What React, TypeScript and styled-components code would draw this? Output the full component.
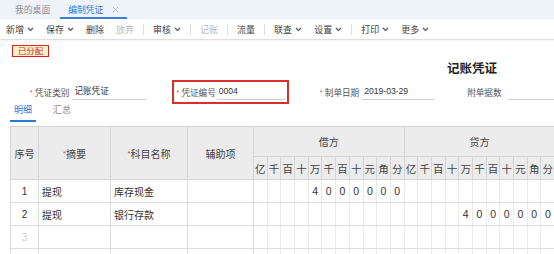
import styled, { createGlobalStyle } from 'styled-components';

const GlobalStyle = createGlobalStyle`
  html, body {
    margin: 0;
    padding: 0;
    background: #fff;
  }
  body {
    font-family: "Liberation Sans", "Noto Sans CJK SC", sans-serif;
    color: #333;
    overflow: hidden;
  }
`

const Page = styled.div`
  width: 554px;
  height: 254px;
  overflow: hidden;
`

const TabBar = styled.div`
  height: 19px;
  background: #eef2f9;
  display: flex;
  gap: 2px;
  padding-left: 7px;
  box-sizing: border-box;
`

const Tab = styled.div<{ $active?: boolean }>`
  display: flex;
  align-items: center;
  gap: 9px;
  padding: 1px 8px 0;
  font-size: 8.8px;
  color: ${p => (p.$active ? '#2b78d8' : '#8c919a')};
  border-bottom: 2px solid ${p => (p.$active ? '#3a7fdc' : 'transparent')};
  box-sizing: border-box;
`

const Toolbar = styled.div`
  height: 21px;
  display: flex;
  align-items: center;
  border-bottom: 1px solid #dedede;
  box-shadow: 0 1px 2px rgba(0, 0, 0, 0.05);
  box-sizing: border-box;
`

const ToolItem = styled.div<{ $disabled?: boolean }>`
  display: flex;
  align-items: center;
  gap: 3px;
  padding: 0 6px;
  font-size: 9px;
  color: ${p => (p.$disabled ? '#b8b8b8' : '#444')};
`

const ToolSep = styled.span`
  width: 1px;
  height: 11px;
  margin: 0 3px;
  background: #dcdcdc;
`

const Badge = styled.div`
  display: inline-block;
  margin: 4px 0 0 12px;
  height: 12px;
  line-height: 10px;
  padding: 0 5px;
  border: 1px solid #d0262a;
  background: #fff3c6;
  color: #d0262a;
  font-size: 8.4px;
  box-sizing: border-box;
`

const TitleRow = styled.div`
  height: 17px;
  margin-top: 3px;
  display: flex;
  justify-content: flex-end;
  padding-right: 57px;
  font-size: 12.5px;
  line-height: 17px;
  font-weight: bold;
  color: #222;
`

const FormRow = styled.div`
  height: 24px;
  margin-top: 2px;
  display: flex;
  align-items: center;
  padding-left: 30px;
  font-size: 8.6px;
`

const Field = styled.div<{ $gap: number }>`
  display: flex;
  align-items: center;
  margin-left: ${p => p.$gap}px;
`

const HighlightField = styled(Field)`
  height: 24px;
  border: 2px solid #d9302c;
  padding: 0 2px;
  box-sizing: border-box;
`

const Star = styled.span`
  width: 5px;
  font-size: 7px;
  color: #e0463f;
  line-height: 1;
`

const Label = styled.span`
  color: #555;
  white-space: nowrap;
`

const Value = styled.div<{ $w: number; $ml: number }>`
  width: ${p => p.$w}px;
  margin-left: ${p => p.$ml}px;
  height: 16px;
  line-height: 15px;
  padding-left: 2px;
  border-bottom: 1px solid #cfcfcf;
  box-sizing: border-box;
  color: #333;
  white-space: nowrap;
`

const SubTabs = styled.div`
  height: 22px;
  display: flex;
  gap: 13px;
  padding-left: 10px;
`

const SubTab = styled.div<{ $active?: boolean }>`
  height: 15px;
  padding: 0 4px 1px;
  line-height: 12px;
  font-size: 9px;
  color: ${p => (p.$active ? '#2b78d8' : '#8c8c8c')};
  border-bottom: 2px solid ${p => (p.$active ? '#2b78d8' : 'transparent')};
`

const Grid = styled.table`
  margin-left: 10px;
  width: 544px;
  border-collapse: collapse;
  table-layout: fixed;
  font-size: 10px;
`

const Col = styled.col<{ $w: number }>`
  width: ${p => p.$w}px;
`

const HeadCell = styled.th<{ $h?: number; $digit?: boolean; $edge?: boolean }>`
  height: ${p => p.$h ?? 22}px;
  padding: 0;
  background: #ececec;
  border: 1px solid #d5d5d5;
  ${p => p.$digit && `border-left-color: ${p.$edge ? '#cfcfcf' : '#e0e0e0'};`}
  font-weight: normal;
  font-size: ${p => (p.$digit ? 10.5 : 10)}px;
  color: #444;
  text-align: center;
  vertical-align: middle;
  white-space: nowrap;
  overflow: hidden;
`

const Req = styled.span`
  color: #e0463f;
  font-size: 8px;
  vertical-align: 2px;
`

const BodyCell = styled.td<{ $center?: boolean; $muted?: boolean }>`
  height: 22px;
  padding: 0 3px;
  border: 1px solid #dcdcdc;
  text-align: ${p => (p.$center ? 'center' : 'left')};
  color: ${p => (p.$muted ? '#cccccc' : '#333')};
  white-space: nowrap;
  overflow: hidden;
`

const DigitCell = styled.td<{ $edge?: boolean }>`
  height: 22px;
  padding: 0;
  border: 1px solid #dcdcdc;
  border-left-color: ${p => (p.$edge ? '#d0d0d0' : '#ebebeb')};
  border-right-color: #ebebeb;
  text-align: center;
  font-size: 10.5px;
  color: #333;
`

const units = '亿千百十万千百十元角分'.split('');

type Entry = {
  seq: string;
  summary: string;
  account: string;
  debit: string;
  credit: string;
};

const entries: Entry[] = [
  { seq: '1', summary: '提现', account: '库存现金', debit: '4000000', credit: '' },
  { seq: '2', summary: '提现', account: '银行存款', debit: '', credit: '4000000' },
  { seq: '3', summary: '', account: '', debit: '', credit: '' },
  { seq: '', summary: '', account: '', debit: '', credit: '' },
];

function spread(amount: string) {
  const cells = Array(11).fill('');
  const chars = amount.split('');
  chars.forEach((c, i) => {
    cells[11 - chars.length + i] = c;
  });
  return cells;
}

function Chevron() {
  return (
    <svg width="7" height="5" viewBox="0 0 7 5" fill="none">
      <path d="M1 1l2.5 2.5L6 1" stroke="#555" strokeWidth="1.2" />
    </svg>
  );
}

function CloseIcon() {
  return (
    <svg width="7" height="7" viewBox="0 0 7 7" fill="none">
      <path d="M1 1l5 5M6 1L1 6" stroke="#b4bac4" strokeWidth="0.9" />
    </svg>
  );
}

export default function App() {
  return (
    <Page>
      <GlobalStyle />
      <TabBar>
        <Tab>我的桌面</Tab>
        <Tab $active>
          编制凭证
          <CloseIcon />
        </Tab>
      </TabBar>
      <Toolbar>
        <ToolItem>新增<Chevron /></ToolItem>
        <ToolItem>保存<Chevron /></ToolItem>
        <ToolItem>删除</ToolItem>
        <ToolItem $disabled>放弃</ToolItem>
        <ToolSep />
        <ToolItem>审核<Chevron /></ToolItem>
        <ToolSep />
        <ToolItem $disabled>记账</ToolItem>
        <ToolSep />
        <ToolItem>流量</ToolItem>
        <ToolSep />
        <ToolItem>联查<Chevron /></ToolItem>
        <ToolItem>设置<Chevron /></ToolItem>
        <ToolSep />
        <ToolItem>打印<Chevron /></ToolItem>
        <ToolItem>更多<Chevron /></ToolItem>
      </Toolbar>
      <Badge>已分配</Badge>
      <TitleRow>记账凭证</TitleRow>
      <FormRow>
        <Field $gap={0}>
          <Star>*</Star>
          <Label>凭证类别</Label>
          <Value $w={75} $ml={3}>记账凭证</Value>
        </Field>
        <HighlightField $gap={25}>
          <Star>*</Star>
          <Label>凭证编号</Label>
          <Value $w={68} $ml={1}>0004</Value>
        </HighlightField>
        <Field $gap={31}>
          <Star>*</Star>
          <Label>制单日期</Label>
          <Value $w={73} $ml={3}>2019-03-29</Value>
        </Field>
        <Field $gap={32}>
          <Label>附单据数</Label>
          <Value $w={60} $ml={6}></Value>
        </Field>
      </FormRow>
      <SubTabs>
        <SubTab $active>明细</SubTab>
        <SubTab>汇总</SubTab>
      </SubTabs>
      <Grid>
        <colgroup>
          <Col $w={28} />
          <Col $w={72} />
          <Col $w={77} />
          <Col $w={66} />
          {Array.from({ length: 22 }).map((_, i) => (
            <Col key={i} $w={13.7} />
          ))}
        </colgroup>
        <thead>
          <tr>
            <HeadCell rowSpan={2}>序号</HeadCell>
            <HeadCell rowSpan={2}><Req>*</Req>摘要</HeadCell>
            <HeadCell rowSpan={2}><Req>*</Req>科目名称</HeadCell>
            <HeadCell rowSpan={2}>辅助项</HeadCell>
            <HeadCell colSpan={11} $h={29}>借方</HeadCell>
            <HeadCell colSpan={11} $h={29}>贷方</HeadCell>
          </tr>
          <tr>
            {[...units, ...units].map((u, i) => (
              <HeadCell key={i} $digit $edge={i % 11 === 0}>{u}</HeadCell>
            ))}
          </tr>
        </thead>
        <tbody>
          {entries.map((e, r) => (
            <tr key={r}>
              <BodyCell $center $muted={r > 1}>{e.seq}</BodyCell>
              <BodyCell>{e.summary}</BodyCell>
              <BodyCell>{e.account}</BodyCell>
              <BodyCell></BodyCell>
              {[...spread(e.debit), ...spread(e.credit)].map((d, i) => (
                <DigitCell key={i} $edge={i % 11 === 0}>{d}</DigitCell>
              ))}
            </tr>
          ))}
        </tbody>
      </Grid>
    </Page>
  );
}
